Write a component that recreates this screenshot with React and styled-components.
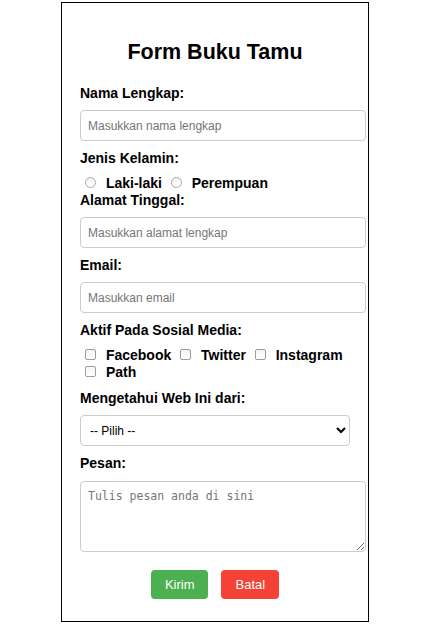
import React from "react";
import styled, { createGlobalStyle } from "styled-components";

const GlobalStyle = createGlobalStyle`
  body {
    margin: 0;
    background: #fff;
    font-family: "Liberation Sans", Arial, sans-serif;
    color: #000;
  }
`;

function App() {
  return (
    <>
      <GlobalStyle />
      <FormBox onSubmit={(e) => e.preventDefault()}>
        <Title>Form Buku Tamu</Title>

        <Label htmlFor="nama">Nama Lengkap:</Label>
        <TextInput id="nama" type="text" placeholder="Masukkan nama lengkap" />

        <Label>Jenis Kelamin:</Label>
        <OptionGroup>
          <Choice>
            <Radio type="radio" name="jk" /> Laki-laki
          </Choice>{" "}
          <Choice>
            <Radio type="radio" name="jk" /> Perempuan
          </Choice>
        </OptionGroup>

        <Label htmlFor="alamat">Alamat Tinggal:</Label>
        <TextInput id="alamat" type="text" placeholder="Masukkan alamat lengkap" />

        <Label htmlFor="email">Email:</Label>
        <TextInput id="email" type="email" placeholder="Masukkan email" />

        <Label>Aktif Pada Sosial Media:</Label>
        <OptionGroup $top={3} $bottom={9}>
          <Choice>
            <Check type="checkbox" /> Facebook
          </Choice>{" "}
          <Choice>
            <Check type="checkbox" /> Twitter
          </Choice>{" "}
          <Choice>
            <Check type="checkbox" /> Instagram
          </Choice>{" "}
          <Choice>
            <Check type="checkbox" /> Path
          </Choice>
        </OptionGroup>

        <Label htmlFor="sumber">Mengetahui Web Ini dari:</Label>
        <Select id="sumber" defaultValue="">
          <option value="">-- Pilih --</option>
          <option value="google">Google</option>
          <option value="teman">Teman</option>
          <option value="sosmed">Sosial Media</option>
        </Select>

        <Label htmlFor="pesan" $gap={10}>Pesan:</Label>
        <MessageArea id="pesan" placeholder="Tulis pesan anda di sini" />

        <ButtonRow>
          <ActionButton type="submit" $color="#4caf50">Kirim</ActionButton>
          <ActionButton type="reset" $color="#f44336">Batal</ActionButton>
        </ButtonRow>
      </FormBox>
    </>
  );
}

export default App;

const FormBox = styled.form`
  width: 270px;
  padding: 18px;
  margin: 2px 0 0 61px;
  border: 1px solid #000;
`;

const Title = styled.h2`
  margin: 19px 0 21px;
  font-size: 21.5px;
  line-height: 24px;
  font-weight: 700;
  text-align: center;
`;

const Label = styled.label`
  display: block;
  margin-bottom: ${(p) => (p.$gap !== undefined ? p.$gap : 9)}px;
  font-size: 14px;
  line-height: 16px;
  font-weight: 700;
`;

const TextInput = styled.input`
  display: block;
  width: 100%;
  height: 15px;
  padding: 7px;
  margin: 0 0 9px;
  border: 1px solid #ccc;
  border-radius: 4px;
  font-family: "Liberation Sans", Arial, sans-serif;
  font-size: 12px;
  color: #000;
  outline: none;
  &::placeholder {
    color: #757575;
  }
`;

const OptionGroup = styled.div`
  margin-top: ${(p) => p.$top || 0}px;
  margin-bottom: ${(p) => p.$bottom || 0}px;
  font-size: 14px;
  line-height: 17px;
  font-weight: 700;
`;

const Choice = styled.label`
  white-space: nowrap;
`;

const Radio = styled.input`
  appearance: none;
  box-sizing: border-box;
  width: 11px;
  height: 11px;
  margin: 0 6px 0 5px;
  border: 1px solid #a8a8a8;
  border-radius: 50%;
  background: linear-gradient(#f4f4f4, #fff);
  vertical-align: baseline;
  &:checked {
    background: radial-gradient(circle, #333 0 2.5px, #fff 3px);
  }
`;

const Check = styled(Radio)`
  border-radius: 2px;
  border-color: #9c9c9c;
  &:checked {
    background: #333;
  }
`;

const Select = styled.select`
  display: block;
  width: 100%;
  height: 31px;
  margin: 0 0 9px;
  padding: 0 5px;
  border: 1px solid #ccc;
  border-radius: 4px;
  background: #fff;
  font-family: "Liberation Sans", Arial, sans-serif;
  font-size: 12px;
  color: #000;
`;

const MessageArea = styled.textarea`
  display: block;
  width: 100%;
  height: 55px;
  padding: 7px;
  margin: 0;
  border: 1px solid #ccc;
  border-radius: 4px;
  font-family: "DejaVu Sans Mono", "Liberation Mono", monospace;
  font-size: 11.5px;
  outline: none;
  &::placeholder {
    color: #757575;
  }
`;

const ButtonRow = styled.div`
  display: flex;
  justify-content: center;
  gap: 13px;
  margin-top: 18px;
  padding-bottom: 4px;
`;

const ActionButton = styled.button`
  padding: 7px 14px;
  border: none;
  border-radius: 4px;
  background: ${(p) => p.$color};
  color: #fff;
  font-family: "Liberation Sans", Arial, sans-serif;
  font-size: 13px;
  line-height: 15px;
  cursor: pointer;
`;
